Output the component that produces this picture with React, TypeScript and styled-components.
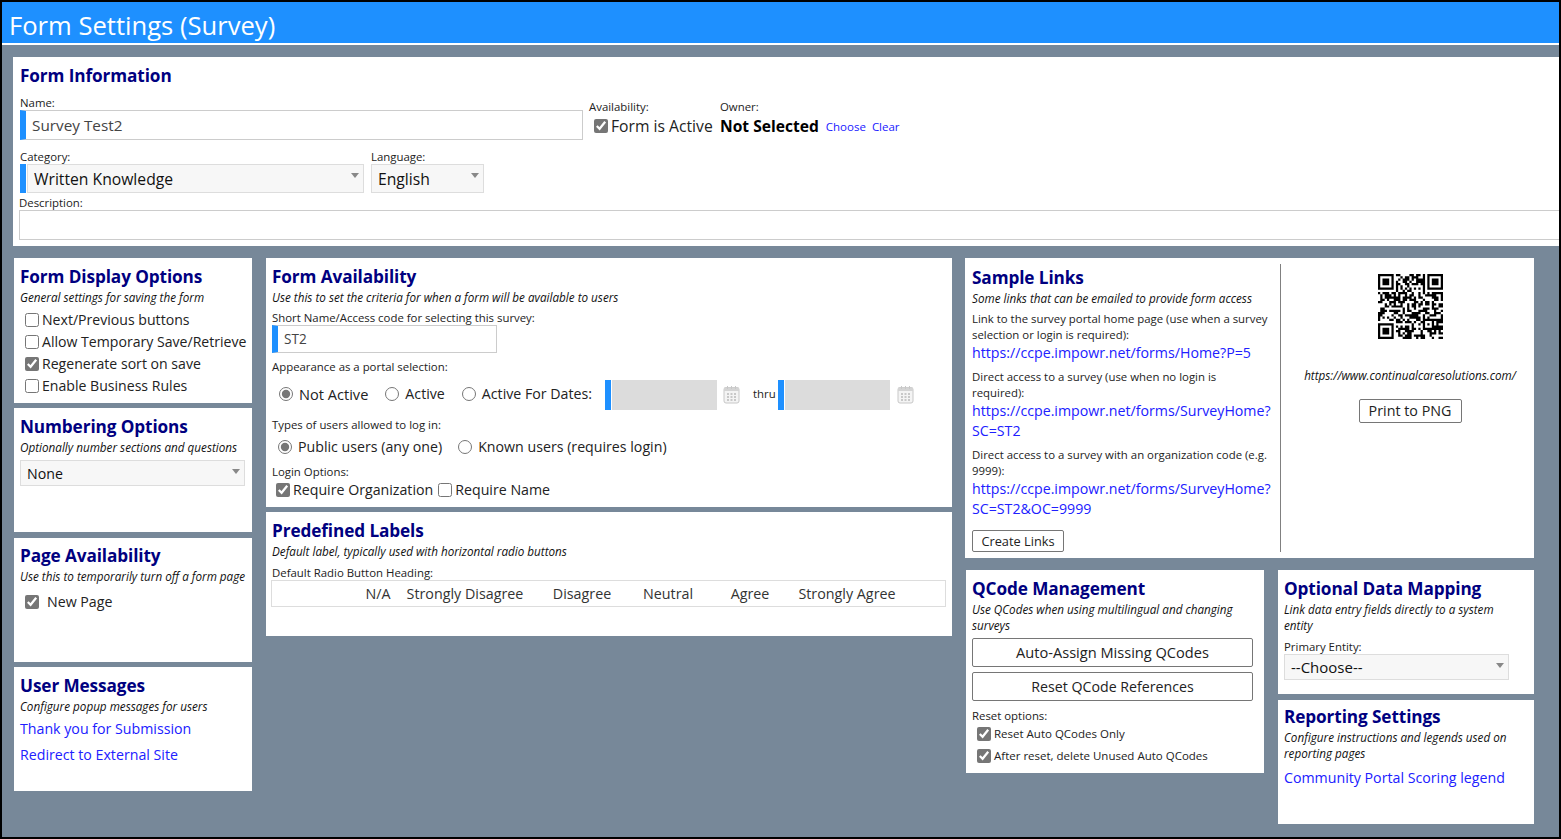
import * as React from 'react';
import styled, { createGlobalStyle } from 'styled-components';

const GlobalStyle = createGlobalStyle`
  html, body { margin: 0; padding: 0; height: 100%; background: #778899; }
  body { font-family: "Open Sans", "Noto Sans", "Liberation Sans", sans-serif; color: #111; overflow: hidden; }
  * { box-sizing: border-box; }
`;

const Page = styled.div`
  width: 1561px;
  height: 839px;
  overflow: hidden;
  background: #778899;
  border: 2px solid #000;
`;

const TitleBar = styled.div`
  height: 41px;
  padding-left: 7px;
  background: #1e90ff;
  border-bottom: 2px solid #fff;
  box-sizing: content-box;
  color: #fff;
  font-size: 25.6px;
  line-height: 48px;
`;

const InfoPanel = styled.section`
  height: 189px;
  margin: 12px 0 0 11px;
  padding: 7px 0 0 7px;
  background: #fff;
`;

const Columns = styled.div`
  display: flex;
  align-items: flex-start;
  margin: 12px 0 0 12px;
`;

const Stack = styled.div<{ $gap?: number; $w?: number; $right?: number }>`
  display: flex;
  flex-direction: column;
  flex: none;
  gap: ${p => p.$gap ?? 5}px;
  width: ${p => (p.$w ? `${p.$w}px` : 'auto')};
  margin-right: ${p => p.$right ?? 0}px;
`;

const Panel = styled.section<{ $h: number; $top?: number; $pad?: number }>`
  height: ${p => p.$h}px;
  margin-top: ${p => p.$top ?? 0}px;
  padding: ${p => p.$pad ?? 7}px 6px 0;
  background: #fff;
`;

const Heading = styled.h2`
  margin: 0;
  color: #000080;
  font-size: 17.2px;
  line-height: 24px;
  font-weight: 700;
  letter-spacing: -0.1px;
`;

const Hint = styled.div`
  font-size: 11.7px;
  line-height: 16px;
  font-style: italic;
  color: #111;
`;

const Label = styled.div<{ $top?: number; $left?: number }>`
  margin-top: ${p => p.$top ?? 0}px;
  margin-left: ${p => p.$left ?? 0}px;
  font-size: 11.4px;
  line-height: 14px;
  color: #222;
`;

const Row = styled.div<{ $gap?: number; $top?: number; $left?: number; $h?: number; $start?: boolean }>`
  display: flex;
  align-items: ${p => (p.$start ? 'flex-start' : 'center')};
  gap: ${p => p.$gap ?? 0}px;
  height: ${p => (p.$h ? `${p.$h}px` : 'auto')};
  margin-top: ${p => p.$top ?? 0}px;
  margin-left: ${p => p.$left ?? 0}px;
`;

const Field = styled.div<{ $w?: number }>`
  width: ${p => (p.$w ? `${p.$w}px` : 'auto')};
  flex: none;
`;

const Input = styled.div<{ $w: number; $h?: number; $required?: boolean; $size?: number; $left?: number }>`
  width: ${p => p.$w}px;
  height: ${p => p.$h ?? 30}px;
  margin-left: ${p => p.$left ?? 0}px;
  padding-left: ${p => (p.$required ? 6 : 8)}px;
  border: 1px solid #ccc;
  border-left: ${p => (p.$required ? '6px solid #1e90ff' : '1px solid #ccc')};
  background: #fff;
  color: #444;
  font-size: ${p => p.$size ?? 15.3}px;
  line-height: ${p => (p.$h ?? 30) - 2}px;
`;

const SelectBox = styled.div<{ $w: number; $h?: number; $bar?: boolean; $size?: number; $top?: number }>`
  position: relative;
  width: ${p => p.$w}px;
  height: ${p => p.$h ?? 29}px;
  padding: 1px 0 0 6px;
  margin-top: ${p => p.$top ?? 0}px;
  margin-left: ${p => (p.$bar ? 1 : 0)}px;
  background: #f7f7f7;
  border: 1px solid #ddd;
  color: #111;
  font-size: ${p => p.$size ?? 15.7}px;
  line-height: ${p => (p.$h ?? 29) - 3}px;

  &::after {
    content: '';
    position: absolute;
    top: 8px;
    right: 4px;
    border: 4px solid transparent;
    border-top: 5px solid #888;
    border-left-width: 4.5px;
    border-right-width: 4.5px;
  }
`;

const Bar = styled.div<{ $h: number }>`
  width: 6px;
  height: ${p => p.$h}px;
  background: #1e90ff;
  flex: none;
`;

const Check = styled.input.attrs({ type: 'checkbox', readOnly: true })`
  width: 14px;
  height: 14px;
  margin: 0 3px 0 0;
  flex: none;
  accent-color: #767676;
`;

const Radio = styled.input.attrs({ type: 'radio', readOnly: true })`
  width: 14px;
  height: 14px;
  margin: 0 6px 0 0;
  flex: none;
  accent-color: #767676;
`;

const OptionText = styled.span<{ $size?: number }>`
  font-size: ${p => p.$size ?? 14.2}px;
  line-height: 22px;
  color: #222;
  white-space: nowrap;
`;

const OptionRow = styled.label<{ $left?: number; $top?: number }>`
  display: flex;
  align-items: center;
  height: 22px;
  margin-top: ${p => p.$top ?? 0}px;
  margin-left: ${p => p.$left ?? 5}px;
`;

const OptionList = styled.div`
  margin-top: 4px;
`;

const OwnerName = styled.span`
  font-size: 15.6px;
  font-weight: 700;
  color: #000;
  margin-right: 7px;
`;

const SmallLink = styled.a`
  color: #2020ff;
  font-size: 11.5px;
  margin-right: 6px;
`;

const TextLink = styled.a<{ $top?: number }>`
  display: block;
  margin-top: ${p => p.$top ?? 0}px;
  color: #2020ff;
  font-size: 14.2px;
  line-height: 26px;
`;

const WrappedLink = styled(TextLink)`
  line-height: 20px;
  word-break: break-all;
`;

const LinkNote = styled.div<{ $top?: number }>`
  margin-top: ${p => p.$top ?? 0}px;
  font-size: 11.4px;
  line-height: 16px;
  color: #222;
`;

const DateBox = styled.div<{ $w: number }>`
  width: ${p => p.$w}px;
  height: 30px;
  margin-top: 2px;
  flex: none;
  background: #dcdcdc;
  border-left: 6px solid #1e90ff;
  box-shadow: inset 1px 0 0 #fff;
`;

const LabelTable = styled.div`
  display: grid;
  grid-template-columns: 92px 28px 146px 88px 84px 80px 114px;
  width: 675px;
  height: 27px;
  margin-left: -1px;
  border: 1px solid #ddd;
  font-size: 14.3px;
  line-height: 25px;
  text-align: center;
  color: #333;
  white-space: nowrap;
`;

const SplitPanel = styled(Panel)`
  display: flex;
  padding: 6px 0 0 0;
`;

const LinksCol = styled.div`
  width: 316px;
  height: 288px;
  padding: 2px 6px 0 7px;
  border-right: 1px solid #808080;
`;

const QrCol = styled.div`
  flex: 1;
  display: flex;
  flex-direction: column;
  align-items: center;
  padding: 10px 0 0 5px;
`;

const QrCaption = styled.div`
  margin-top: 28px;
  font-size: 11.7px;
  line-height: 16px;
  font-style: italic;
  color: #111;
  white-space: nowrap;
`;

const Button = styled.div<{ $w?: number; $h?: number; $size?: number; $top?: number }>`
  width: ${p => (p.$w ? `${p.$w}px` : 'auto')};
  height: ${p => p.$h ?? 24}px;
  margin-top: ${p => p.$top ?? 0}px;
  border: 1px solid #767676;
  border-radius: 2px;
  background: #fff;
  color: #222;
  font-size: ${p => p.$size ?? 14.3}px;
  line-height: ${p => (p.$h ?? 24) - 2}px;
  text-align: center;
`;

const RightSplit = styled.div`
  display: grid;
  grid-template-columns: 298px 256px;
  column-gap: 14px;
  align-items: start;
  margin: 12px 0 0 1px;
`;

// the QR picture: finder, alignment and timing marks are real, data modules are a seeded fill
const QR_SIZE = 29;
const qrCells = (): string => {
  let seed = 7321;
  let d = '';
  const finder = (x: number, y: number) => x >= 0 && x < 7 && y >= 0 && y < 7 &&
    (x === 0 || x === 6 || y === 0 || y === 6 || (x >= 2 && x <= 4 && y >= 2 && y <= 4));
  const inFinderZone = (x: number, y: number) =>
    (x < 8 && y < 8) || (x > QR_SIZE - 9 && y < 8) || (x < 8 && y > QR_SIZE - 9);
  const inAlign = (x: number, y: number) => x >= 20 && x <= 24 && y >= 20 && y <= 24;
  const align = (x: number, y: number) =>
    x === 20 || x === 24 || y === 20 || y === 24 || (x === 22 && y === 22);
  for (let y = 0; y < QR_SIZE; y++) {
    for (let x = 0; x < QR_SIZE; x++) {
      seed = (seed * 1103515245 + 12345) & 0x7fffffff;
      let on = (seed >> 16) % 100 < 54;
      if (x === 6 || y === 6) on = (x + y) % 2 === 0;
      if (inAlign(x, y)) on = align(x, y);
      if (inFinderZone(x, y)) on = finder(x, y) || finder(x - (QR_SIZE - 7), y) || finder(x, y - (QR_SIZE - 7));
      if (on) d += `M${x} ${y}h1v1h-1z`;
    }
  }
  return d;
};

const QrSvg = styled.svg`
  display: block;
  width: 65px;
  height: 65px;
`;

const QrCode = () => (
  <QrSvg viewBox={`0 0 ${QR_SIZE} ${QR_SIZE}`}>
    <path d={qrCells()} fill="#000" />
  </QrSvg>
);

const CalendarSvg = styled.svg`
  display: block;
  flex: none;
  width: 17px;
  height: 19px;
`;

const CalendarIcon = () => (
  <CalendarSvg viewBox="0 0 17 19">
    <rect x="1" y="2.5" width="15" height="15.5" rx="2" fill="#f4f4f4" stroke="#c8c8c8" />
    <rect x="1" y="2.5" width="15" height="3.5" fill="#d4d4d4" />
    <path d="M4.5 1v3M8.5 1v3M12.5 1v3" stroke="#c8c8c8" />
    <path d="M4 8h2v2H4zM7.5 8h2v2h-2zM11 8h2v2h-2zM4 11h2v2H4zM7.5 11h2v2h-2zM11 11h2v2h-2zM4 14h2v2H4zM7.5 14h2v2h-2zM11 14h2v2h-2z" fill="#c8c8c8" />
  </CalendarSvg>
);

const Spacer = styled.span<{ $w: number }>`
  display: inline-block;
  flex: none;
  width: ${p => p.$w}px;
`;

const radioLabels = ['N/A', 'Strongly Disagree', 'Disagree', 'Neutral', 'Agree', 'Strongly Agree'];

const App = () => (
  <Page>
    <GlobalStyle />
    <TitleBar>Form Settings (Survey)</TitleBar>

    <InfoPanel>
      <Heading>Form Information</Heading>
      <Row $top={8} $start>
        <Field $w={569}>
          <Label>Name:</Label>
          <Input $w={563} $required>Survey Test2</Input>
        </Field>
        <Field $w={131}>
          <Label $top={4}>Availability:</Label>
          <OptionRow $left={5} $top={1}>
            <Check defaultChecked />
            <OptionText $size={15.7}>Form is Active</OptionText>
          </OptionRow>
        </Field>
        <Field>
          <Label $top={4}>Owner:</Label>
          <Row $h={22} $top={1}>
            <OwnerName>Not Selected</OwnerName>
            <SmallLink>Choose</SmallLink>
            <SmallLink>Clear</SmallLink>
          </Row>
        </Field>
      </Row>
      <Row $top={10} $start>
        <Field $w={351}>
          <Label>Category:</Label>
          <Row>
            <Bar $h={29} />
            <SelectBox $w={337} $bar>Written Knowledge</SelectBox>
          </Row>
        </Field>
        <Field>
          <Label>Language:</Label>
          <SelectBox $w={113}>English</SelectBox>
        </Field>
      </Row>
      <Label $top={3} $left={-1}>Description:</Label>
      <Input $w={1560} $left={-1} />
    </InfoPanel>

    <Columns>
      <Stack $w={238} $right={14}>
        <Panel $h={145}>
          <Heading>Form Display Options</Heading>
          <Hint>General settings for saving the form</Hint>
          <OptionList>
            <OptionRow><Check /><OptionText $size={14.1}>Next/Previous buttons</OptionText></OptionRow>
            <OptionRow><Check /><OptionText $size={14.1}>Allow Temporary Save/Retrieve</OptionText></OptionRow>
            <OptionRow><Check defaultChecked /><OptionText $size={14.1}>Regenerate sort on save</OptionText></OptionRow>
            <OptionRow><Check /><OptionText $size={14.1}>Enable Business Rules</OptionText></OptionRow>
          </OptionList>
        </Panel>
        <Panel $h={124}>
          <Heading>Numbering Options</Heading>
          <Hint>Optionally number sections and questions</Hint>
          <SelectBox $w={225} $h={26} $size={14.2} $top={5}>None</SelectBox>
        </Panel>
        <Panel $h={124} $top={1} $pad={6}>
          <Heading>Page Availability</Heading>
          <Hint>Use this to temporarily turn off a form page</Hint>
          <OptionRow $top={7}>
            <Check defaultChecked />
            <Spacer $w={5} />
            <OptionText $size={14.2}>New Page</OptionText>
          </OptionRow>
        </Panel>
        <Panel $h={124}>
          <Heading>User Messages</Heading>
          <Hint>Configure popup messages for users</Hint>
          <TextLink $top={2}>Thank you for Submission</TextLink>
          <TextLink>Redirect to External Site</TextLink>
        </Panel>
      </Stack>

      <Stack $w={686} $right={13}>
        <Panel $h={249}>
          <Heading>Form Availability</Heading>
          <Hint>Use this to set the criteria for when a form will be available to users</Hint>
          <Label $top={6}>Short Name/Access code for selecting this survey:</Label>
          <Input $w={225} $h={28} $required $size={13.6}>ST2</Input>
          <Label $top={7}>Appearance as a portal selection:</Label>
          <Row $top={5} $left={7} $h={30}>
            <Radio defaultChecked name="portal" />
            <OptionText $size={14.6}>Not Active</OptionText>
            <Spacer $w={17} />
            <Radio name="portal2" />
            <OptionText>Active</OptionText>
            <Spacer $w={17} />
            <Radio name="portal3" />
            <OptionText>Active For Dates:</OptionText>
            <Spacer $w={13} />
            <DateBox $w={112} />
            <Spacer $w={6} />
            <CalendarIcon />
            <Spacer $w={13} />
            <Label>thru</Label>
            <Spacer $w={2} />
            <DateBox $w={112} />
            <Spacer $w={7} />
            <CalendarIcon />
          </Row>
          <Label $top={9}>Types of users allowed to log in:</Label>
          <Row $top={4} $left={6} $h={22}>
            <Radio defaultChecked name="users" />
            <OptionText>Public users (any one)</OptionText>
            <Spacer $w={16} />
            <Radio name="users2" />
            <OptionText>Known users (requires login)</OptionText>
          </Row>
          <Label $top={7}>Login Options:</Label>
          <Row $left={4} $h={22}>
            <Check defaultChecked />
            <OptionText>Require Organization</OptionText>
            <Spacer $w={5} />
            <Check />
            <OptionText>Require Name</OptionText>
          </Row>
        </Panel>
        <Panel $h={124}>
          <Heading>Predefined Labels</Heading>
          <Hint>Default label, typically used with horizontal radio buttons</Hint>
          <Label $top={7}>Default Radio Button Heading:</Label>
          <LabelTable>
            <span />
            {radioLabels.map(label => <span key={label}>{label}</span>)}
          </LabelTable>
        </Panel>
      </Stack>

      <Stack $w={569} $gap={0}>
        <SplitPanel $h={300}>
          <LinksCol>
            <Heading>Sample Links</Heading>
            <Hint>Some links that can be emailed to provide form access</Hint>
            <LinkNote $top={5}>Link to the survey portal home page (use when a survey<br />selection or login is required):</LinkNote>
            <WrappedLink>https://ccpe.impowr.net/forms/Home?P=5</WrappedLink>
            <LinkNote $top={6}>Direct access to a survey (use when no login is<br />required):</LinkNote>
            <WrappedLink>https://ccpe.impowr.net/forms/SurveyHome?<br />SC=ST2</WrappedLink>
            <LinkNote $top={6}>Direct access to a survey with an organization code (e.g.<br />9999):</LinkNote>
            <WrappedLink>https://ccpe.impowr.net/forms/SurveyHome?<br />SC=ST2&amp;OC=9999</WrappedLink>
            <Button $w={92} $h={22} $size={12.8} $top={11}>Create Links</Button>
          </LinksCol>
          <QrCol>
            <QrCode />
            <QrCaption>https://www.continualcaresolutions.com/</QrCaption>
            <Button $w={103} $top={16}>Print to PNG</Button>
          </QrCol>
        </SplitPanel>

        <RightSplit>
          <Panel $h={203}>
            <Heading>QCode Management</Heading>
            <Hint>Use QCodes when using multilingual and changing surveys</Hint>
            <Button $w={281} $h={29} $size={14.6} $top={5}>Auto-Assign Missing QCodes</Button>
            <Button $w={281} $h={29} $size={14.2} $top={5}>Reset QCode References</Button>
            <Label $top={8}>Reset options:</Label>
            <OptionRow $left={5}><Check defaultChecked /><OptionText $size={11.5}>Reset Auto QCodes Only</OptionText></OptionRow>
            <OptionRow $left={5}><Check defaultChecked /><OptionText $size={11.5}>After reset, delete Unused Auto QCodes</OptionText></OptionRow>
          </Panel>
          <Stack $gap={6}>
            <Panel $h={124}>
              <Heading>Optional Data Mapping</Heading>
              <Hint>Link data entry fields directly to a system<br />entity</Hint>
              <Label $top={7}>Primary Entity:</Label>
              <SelectBox $w={225} $h={26} $size={15}>--Choose--</SelectBox>
            </Panel>
            <Panel $h={124} $pad={5}>
              <Heading>Reporting Settings</Heading>
              <Hint>Configure instructions and legends used on reporting pages</Hint>
              <TextLink $top={4}>Community Portal Scoring legend</TextLink>
            </Panel>
          </Stack>
        </RightSplit>
      </Stack>
    </Columns>
  </Page>
);

export default App;
